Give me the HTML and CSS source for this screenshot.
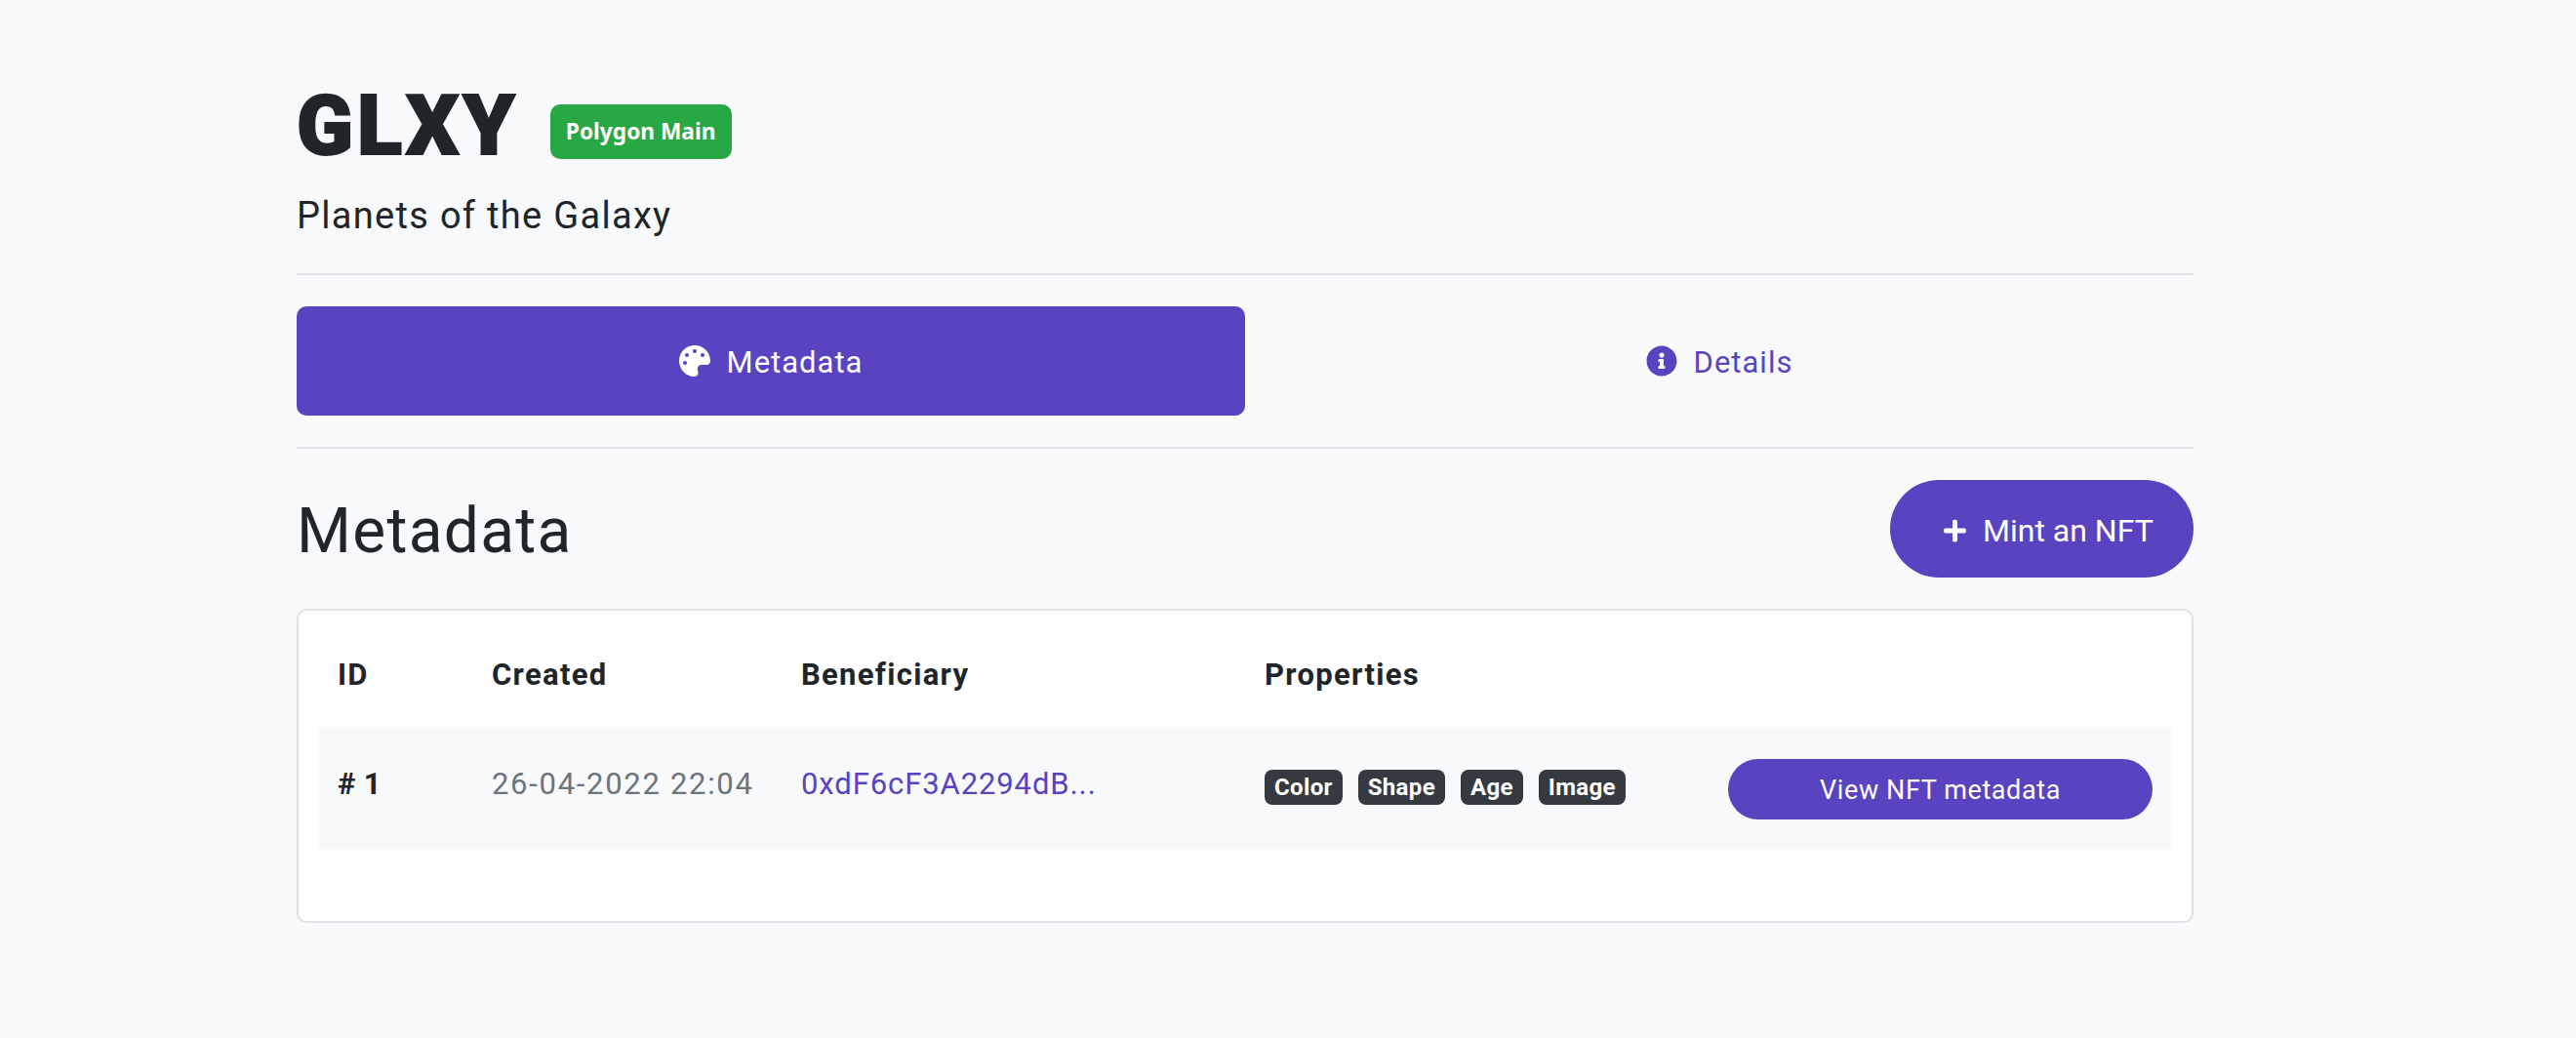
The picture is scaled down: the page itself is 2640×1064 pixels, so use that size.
FILE: index.html
```html
<!DOCTYPE html>
<html lang="en">
<head>
<meta charset="utf-8">
<title>GLXY</title>
<link rel="stylesheet" href="styles.css">
</head>
<body>
<main class="page">
  <header class="head">
    <div class="title-row">
      <h1 class="title">GLXY</h1>
      <span class="network">Polygon Main</span>
    </div>
    <p class="subtitle">Planets of the Galaxy</p>
  </header>
  <nav class="tabs">
    <a class="tab tab-active">
      <svg class="tab-icon" viewBox="0 0 512 512"><path d="M204.3 5C104.9 24.4 24.8 104.3 5.2 203.4c-37 187 131.7 326.4 258.8 306.7 41.2-6.4 61.4-54.6 42.5-91.7-23.1-45.4 9.9-98.4 60.9-98.4h79.7c35.8 0 64.8-29.6 64.9-65.3C511.5 97.1 368.1-26.9 204.3 5zM96 320c-17.7 0-32-14.3-32-32s14.3-32 32-32 32 14.3 32 32-14.3 32-32 32zm32-128c-17.7 0-32-14.3-32-32s14.3-32 32-32 32 14.3 32 32-14.3 32-32 32zm128-64c-17.7 0-32-14.3-32-32s14.3-32 32-32 32 14.3 32 32-14.3 32-32 32zm128 64c-17.7 0-32-14.3-32-32s14.3-32 32-32 32 14.3 32 32-14.3 32-32 32z"/></svg>
      <span class="tab-label">Metadata</span>
    </a>
    <a class="tab">
      <svg class="tab-icon" viewBox="0 0 512 512"><path d="M256 8C119.043 8 8 119.083 8 256c0 136.997 111.043 248 248 248s248-111.003 248-248C504 119.083 392.957 8 256 8zm0 110c23.196 0 42 18.804 42 42s-18.804 42-42 42-42-18.804-42-42 18.804-42 42-42zm56 254c0 6.627-5.373 12-12 12h-88c-6.627 0-12-5.373-12-12v-24c0-6.627 5.373-12 12-12h12v-64h-12c-6.627 0-12-5.373-12-12v-24c0-6.627 5.373-12 12-12h64c6.627 0 12 5.373 12 12v100h12c6.627 0 12 5.373 12 12v24z"/></svg>
      <span class="tab-label">Details</span>
    </a>
  </nav>
  <section class="section-head">
    <h2 class="section-title">Metadata</h2>
    <a class="mint">
      <svg class="mint-icon" viewBox="0 0 448 512"><path d="M416 208H272V64c0-17.670-14.330-32-32-32h-32c-17.670 0-32 14.330-32 32v144H32c-17.670 0-32 14.330-32 32v32c0 17.670 14.330 32 32 32h144v144c0 17.670 14.330 32 32 32h32c17.670 0 32-14.330 32-32V304h144c17.670 0 32-14.330 32-32v-32c0-17.670-14.330-32-32-32z"/></svg>
      <span class="mint-label">Mint an NFT</span>
    </a>
  </section>
  <section class="card">
    <div class="grid grid-head">
      <div>ID</div>
      <div>Created</div>
      <div>Beneficiary</div>
      <div>Properties</div>
    </div>
    <div class="grid grid-row">
      <div class="id">#&#8201;1</div>
      <div class="date">26-04-2022 22:04</div>
      <a class="addr">0xdF6cF3A2294dB...</a>
      <div class="props">
        <span class="prop">Color</span>
        <span class="prop">Shape</span>
        <span class="prop">Age</span>
        <span class="prop">Image</span>
      </div>
      <a class="view">View NFT metadata</a>
    </div>
  </section>
</main>
</body>
</html>
```
FILE: styles.css
```css
* { box-sizing: border-box; }
html, body { margin: 0; }
body {
  background: #f8f9fb;
  color: #212529;
  font-family: "Roboto", "Noto Sans", sans-serif;
}
.page {
  width: 1944px;
  margin-left: 304px;
  padding-top: 83px;
}
.head {
  padding-bottom: 35px;
  border-bottom: 2px solid #dfe1e4;
}
.title-row {
  display: flex;
  align-items: flex-end;
  gap: 32px;
}
.title {
  margin: 6px 0 -6px;
  font-size: 85px;
  line-height: 80px;
  font-weight: 900;
  letter-spacing: 4px;
  -webkit-text-stroke: 2px #212529;
}
.network {
  display: block;
  height: 56px;
  width: 186px;
  background: #28a745;
  border-radius: 10px;
  color: #fff;
  font-family: "Noto Sans", sans-serif;
  font-weight: 700;
  font-size: 22.7px;
  line-height: 56px;
  text-align: center;
}
.subtitle {
  margin: 34px 0 0;
  font-size: 38px;
  line-height: 48px;
  font-weight: 400;
  letter-spacing: 1.3px;
}
.tabs {
  display: grid;
  grid-template-columns: 972px 1fr;
  padding: 32px 0;
  border-bottom: 2px solid #dfe1e4;
}
.tab {
  height: 112px;
  display: flex;
  align-items: center;
  justify-content: center;
  gap: 17px;
  border-radius: 10px;
  color: #5a43c0;
  font-size: 31px;
  letter-spacing: 1px;
}
.tab-label { padding-top: 3px; }
.tab-active {
  background: #5a43c0;
  color: #fff;
}
.tab-icon {
  width: 32px;
  height: 32px;
  fill: currentColor;
}
.section-head {
  display: flex;
  justify-content: space-between;
  align-items: center;
  padding: 32px 0;
}
.section-title {
  margin: 6px 0 0;
  font-size: 64px;
  font-weight: 400;
  letter-spacing: 1.3px;
  line-height: 94px;
}
.mint {
  width: 311px;
  height: 100px;
  padding-left: 55px;
  display: flex;
  align-items: center;
  gap: 17px;
  border-radius: 50px;
  background: #5a43c0;
  color: #fff;
  font-size: 32px;
}
.mint-label { padding-top: 3px; }
.mint-icon {
  width: 23px;
  height: 26px;
  margin-top: 3px;
  fill: currentColor;
}
.card {
  height: 322px;
  padding: 0 20px;
  background: #fff;
  border: 2px solid #dfe1e4;
  border-radius: 10px;
}
.grid {
  display: grid;
  grid-template-columns: 158px 317px 475px 475px 1fr;
  align-items: center;
  padding-left: 20px;
}
.grid-head {
  height: 119px;
  padding-top: 12px;
  font-size: 31px;
  font-weight: 700;
  letter-spacing: 1.3px;
}
.grid-row {
  height: 126px;
  background: #f8f9fa;
  font-size: 31px;
}
.id, .date, .addr { margin-bottom: 10px; }
.id { font-weight: 700; letter-spacing: 1px; }
.date { color: #6c757d; letter-spacing: 1.7px; }
.addr { color: #5a43c0; letter-spacing: .9px; }
.props {
  display: flex;
  gap: 16px;
  margin-bottom: 2px;
}
.prop {
  height: 36px;
  padding: 0 10px;
  border-radius: 8px;
  background: #343a40;
  color: #fff;
  font-size: 24px;
  font-weight: 700;
  line-height: 36px;
  letter-spacing: .35px;
  display: block;
}
.view {
  width: 435px;
  height: 62px;
  margin-top: 1px;
  border-radius: 31px;
  background: #5a43c0;
  color: #fff;
  font-size: 27px;
  line-height: 65px;
  letter-spacing: .6px;
  text-align: center;
}
```
